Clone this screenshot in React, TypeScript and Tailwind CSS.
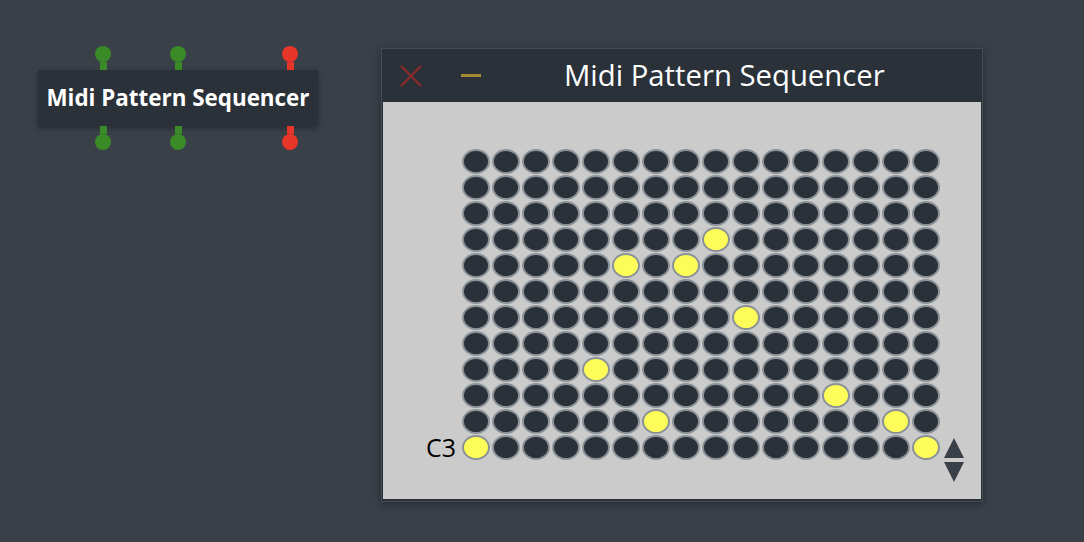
import React from 'react'

const ROWS = 12
const COLS = 16

// active steps: [row, col] counted from the top-left cell
const active = new Set(['3-8', '4-5', '4-7', '6-9', '8-4', '9-12', '10-6', '10-14', '11-0', '11-15'])

const pins = [
  { left: 57, color: 'bg-[#3a8a28]' },
  { left: 132, color: 'bg-[#3a8a28]' },
  { left: 244, color: 'bg-[#e8352a]' },
]

function Pin({ left, color, bottom }: { left: number; color: string; bottom?: boolean }) {
  return (
    <div
      className={`absolute flex items-center ${bottom ? 'flex-col-reverse top-[56px]' : 'flex-col bottom-[56px]'}`}
      style={{ left }}
    >
      <div className={`w-4 h-4 rounded-full ${color}`} />
      <div className={`w-[7px] h-[8px] ${color}`} />
    </div>
  )
}

function NodeCard() {
  return (
    <div className="absolute left-[38px] top-[70px] w-[280px] h-[56px] bg-[#2a3139] shadow-[0_2px_6px_rgba(0,0,0,0.35)] flex items-center justify-center">
      {pins.map((p) => (
        <Pin key={'t' + p.left} left={p.left} color={p.color} />
      ))}
      {pins.map((p) => (
        <Pin key={'b' + p.left} left={p.left} color={p.color} bottom />
      ))}
      <span className="text-white font-bold text-[22.4px] font-['Open_Sans',sans-serif]">
        Midi Pattern Sequencer
      </span>
    </div>
  )
}

function StepGrid() {
  return (
    <div className="grid grid-cols-[repeat(16,28px)] gap-x-[2px] gap-y-[1px]">
      {Array.from({ length: ROWS * COLS }).map((_, i) => {
        const r = Math.floor(i / COLS)
        const c = i % COLS
        const on = active.has(`${r}-${c}`)
        return (
          <div
            key={i}
            className={`w-[28px] h-[25px] rounded-[50%] border-2 border-[#8a9197] ${on ? 'bg-[#fdfc58]' : 'bg-[#2a3139]'}`}
          />
        )
      })}
    </div>
  )
}

function SequencerWindow() {
  return (
    <div className="absolute left-[381px] top-[48px] w-[602px] h-[454px] bg-[#2a3139] border border-[#454c54] shadow-[0_2px_8px_rgba(0,0,0,0.35)] flex flex-col">
      <div className="h-[53px] flex items-center px-[18px]">
        <svg width="22" height="22" viewBox="0 0 22 22" className="shrink-0">
          <path d="M1 1 L21 21 M21 1 L1 21" stroke="#8e2b2b" strokeWidth="2.2" />
        </svg>
        <div className="ml-[39px] w-[20px] h-[3px] bg-[#a48a35] shrink-0" />
        <span className="ml-[83px] text-white text-[29.3px] leading-none font-['Open_Sans',sans-serif]">
          Midi Pattern Sequencer
        </span>
      </div>
      <div className="flex-1 mx-[1px] mb-[2px] bg-[#cbcbcb] flex items-start pt-[47px]">
        <div className="w-[79px] h-[311px] flex flex-col justify-end items-end pr-[6px]">
          <span className="text-black text-[25px] leading-[25px] font-['Open_Sans',sans-serif]">C3</span>
        </div>
        <StepGrid />
        <div className="ml-[4px] pt-[289px] flex flex-col gap-[4px]">
          <svg width="20" height="20" viewBox="0 0 20 20">
            <path d="M10 0 L20 20 L0 20 Z" fill="#394048" />
          </svg>
          <svg width="20" height="20" viewBox="0 0 20 20">
            <path d="M0 0 L20 0 L10 20 Z" fill="#394048" />
          </svg>
        </div>
      </div>
    </div>
  )
}

export default function App() {
  return (
    <div className="relative w-[1084px] h-[542px] bg-[#394048] overflow-hidden">
      <NodeCard />
      <SequencerWindow />
    </div>
  )
}
